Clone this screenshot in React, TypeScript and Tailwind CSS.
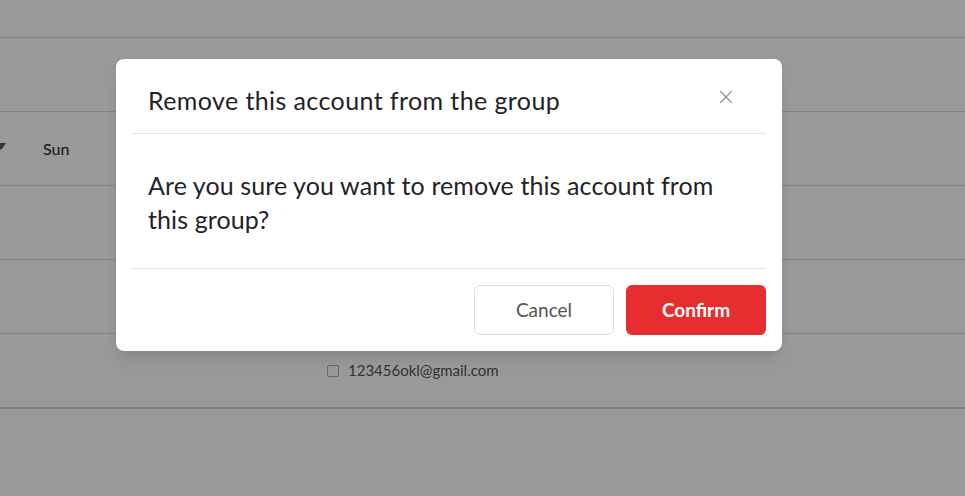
import { X } from "lucide-react";

const font = { fontFamily: '"Lato", "Liberation Sans", sans-serif' };

function BackgroundTable() {
  return (
    <div className="w-full h-[496px] bg-white">
      <div className="h-[38px] border-b border-[#dcdcdc]" />
      <div className="h-[74px] border-b border-[#dcdcdc]" />
      <div className="h-[74px] border-b border-[#dcdcdc] flex items-center">
        <span className="w-0 h-0 border-x-[5px] border-x-transparent border-t-[7px] border-t-[#555] -ml-[4px] -mt-[4px]" />
        <span className="ml-[37px] text-[16px] text-[#222]">Sun</span>
      </div>
      <div className="h-[74px] border-b border-[#dcdcdc]" />
      <div className="h-[74px] border-b border-[#dcdcdc]" />
      <div className="h-[75px] border-b-2 border-[#d5d5d5] flex items-center pl-[327px]">
        <span className="w-[12px] h-[12px] border border-[#aaa] rounded-[2px] bg-white" />
        <span className="ml-[9px] text-[15px] text-[#555]">123456okl@gmail.com</span>
      </div>
    </div>
  );
}

export default function App() {
  return (
    <div className="relative w-[965px] h-[496px] overflow-hidden" style={font}>
      <BackgroundTable />
      <div className="absolute inset-0 bg-black/40" />
      <div className="absolute left-[116px] top-[59px] w-[666px] h-[292px] bg-white rounded-[8px] shadow-lg flex flex-col">
        <div className="mx-[16px] h-[75px] border-b border-[#e5e5e5] flex items-center justify-between pl-[16px] pr-[29px]">
          <h2 className="text-[25px] tracking-[0.4px] text-[#1f2329] pt-[9px]">Remove this account from the group</h2>
          <X className="w-[22px] h-[22px] text-[#8a8a8a] mt-[2px]" strokeWidth={1.2} />
        </div>
        <div className="mx-[16px] h-[135px] border-b border-[#e5e5e5] px-[16px] pt-[34px]">
          <p className="text-[25px] tracking-[0.1px] leading-[34px] text-[#1f2329] w-[590px]">
            Are you sure you want to remove this account from this group?
          </p>
        </div>
        <div className="flex justify-end gap-[12px] px-[16px] pt-[16px]">
          <button className="w-[140px] h-[50px] rounded-[6px] border border-[#dcdde2] text-[19px] text-[#555]">
            Cancel
          </button>
          <button className="w-[140px] h-[50px] rounded-[6px] bg-[#e62e2e] text-[19px] font-bold text-white">
            Confirm
          </button>
        </div>
      </div>
    </div>
  );
}
